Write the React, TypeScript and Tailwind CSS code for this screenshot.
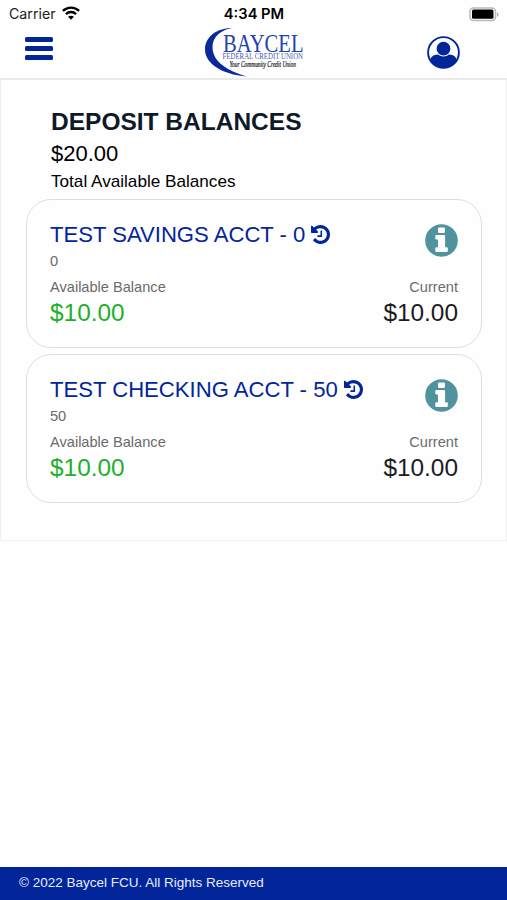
interface Account {
  name: string;
  suffix: string;
  available: string;
  current: string;
}

const accounts: Account[] = [
  { name: "TEST SAVINGS ACCT", suffix: "0", available: "$10.00", current: "$10.00" },
  { name: "TEST CHECKING ACCT", suffix: "50", available: "$10.00", current: "$10.00" },
];

function StatusBar() {
  return (
    <div className="grid h-7 grid-cols-3 items-center pl-[9px] pr-[8px] font-[Inter,sans-serif] text-[14px] leading-7 text-[#222]">
      <div className="flex items-center gap-[6px]">
        <span className="text-[14.2px]">Carrier</span>
        <svg className="mt-[-2px] h-[14px] w-[18px]" viewBox="0 0 18 14" fill="none" stroke="#000" strokeWidth="2.300">
          <path d="M.9 4.900c4.600-4.400 11.600-4.400 16.200 0M3.900 8.100c2.900-2.800 7.300-2.800 10.200 0" />
          <path d="M9 13.800l-2.900-3c1.600-1.500 4.200-1.500 5.800 0z" fill="#000" stroke="none" />
        </svg>
      </div>
      <span className="text-center text-[14.7px] font-semibold text-black">4:34 PM</span>
      <svg className="h-[15px] w-[31px] justify-self-end" viewBox="0 0 31 15">
        <rect x="2" y="1" width="25.500" height="12.500" rx="3.500" fill="#fff" stroke="#b9b9b9" strokeWidth="1.500" />
        <rect x="4" y="2.600" width="21.500" height="9.200" rx="1.500" fill="#000" />
        <path d="M29 5.200v4.600c1-.4 1.600-1.300 1.600-2.300s-.6-1.900-1.600-2.300z" fill="#b0b0b0" />
      </svg>
    </div>
  );
}

function Logo() {
  return (
    <svg className="h-[52px] w-[102px] overflow-visible" viewBox="0 0 102 52">
      <path d="M28 2C12 2 1 11.500 1 23.500 1 37 17 48.500 43 50.500 24 45 8.500 36 8.500 21 8.500 11 16 4.500 28 2z" fill="#0a2a9c" />
      <text x="19" y="26.300" fontFamily="'Liberation Serif', serif" fontSize="25" fill="#2443ad" textLength="80.500" lengthAdjust="spacingAndGlyphs">BAYCEL</text>
      <text x="18.500" y="33.300" fontFamily="'Liberation Serif', serif" fontSize="8.300" fill="#3f5cb8" textLength="80.500" lengthAdjust="spacingAndGlyphs">FEDERAL CREDIT UNION</text>
      <text x="25.500" y="41.300" fontFamily="'Liberation Serif', serif" fontStyle="italic" fontSize="7.500" fill="#222" stroke="#222" strokeWidth=".2" textLength="66.500" lengthAdjust="spacingAndGlyphs">Your Community Credit Union</text>
    </svg>
  );
}

function HistoryIcon() {
  return (
    <svg className="mt-[-2px] ml-[6px] size-[19px]" viewBox="0 128 1536 1536" fill="currentColor">
      <path d="M1536 896q0 156-61 298t-164 245-245 164-298 61q-172 0-327-72.500T177 1387q-7-10-6.500-22.500T179 1344l137-138q10-9 25-9 16 2 23 12 73 95 179 147t225 52q104 0 198.500-40.500T1130 1258t109.500-163.500T1280 896t-40.500-198.500T1130 534 966.500 424.500 768 384q-98 0-188 35.500T420 521l137 138q31 30 14 69-17 40-59 40H64q-26 0-45-19T0 704V256q0-42 40-59 39-17 69 14l130 129q107-101 244.500-156.500T768 128q156 0 298 61t245 164 164 245 61 298zm-640-288v448q0 14-9 23t-23 9H544q-14 0-23-9t-9-23v-64q0-14 9-23t23-9h224V608q0-14 9-23t23-9h64q14 0 23 9t9 23z" />
    </svg>
  );
}

function InfoIcon() {
  return (
    <svg className="mt-[2px] size-[33px]" viewBox="0 0 33 33">
      <circle cx="16.500" cy="16.500" r="16.300" fill="#51929f" />
      <g fill="#fff">
        <rect x="13" y="3.500" width="6.900" height="5.400" rx=".8" />
        <path d="M11.300 11h7.800a1 1 0 0 1 1 1v11.200h1.700a1 1 0 0 1 1 1v2.700a1 1 0 0 1-1 1H11.300a1 1 0 0 1-1-1v-2.700a1 1 0 0 1 1-1H13v-7.700h-1.700a1 1 0 0 1-1-1V12a1 1 0 0 1 1-1z" />
      </g>
    </svg>
  );
}

function Header() {
  return (
    <header className="flex h-[50px] items-start justify-between pl-[25px] pr-[47px]">
      <button aria-label="Menu" className="mt-[9px] flex w-7 flex-col gap-1">
        <span className="h-[5px] rounded-[1.5px] bg-[#02269a]" />
        <span className="h-[5px] rounded-[1.5px] bg-[#02269a]" />
        <span className="h-[5px] rounded-[1.5px] bg-[#02269a]" />
      </button>
      <div className="-mt-0.5 ml-[29px]">
        <Logo />
      </div>
      <button aria-label="Profile" className="mt-2">
        <svg className="size-[33px]" viewBox="0 0 33 33" fill="#02269a">
          <circle cx="16.500" cy="16.500" r="15.400" fill="none" stroke="#02269a" strokeWidth="1.900" />
          <circle cx="16.500" cy="12.700" r="6.900" />
          <path d="M3 24.500c1-3.600 3-5.600 8-5.900 3.200 2.600 7.800 2.600 11 0 5 .3 7 2.300 8 5.900-2.600 4.700-8 7.500-13.500 7.500S5.600 29.200 3 24.500z" />
        </svg>
      </button>
    </header>
  );
}

function AccountCard({ account }: { account: Account }) {
  return (
    <section className="h-[149px] rounded-[25px] border-[1.5px] border-[#dededf] bg-[#fefefe] px-[23px] pt-[22px]">
      <div className="flex items-start justify-between">
        <div>
          <h2 className="flex h-[26px] items-center text-[22.1px] leading-[26px] text-[#02269a]">
            {account.name} - {account.suffix}
            <HistoryIcon />
          </h2>
          <p className="mt-[5px] text-[14.6px] leading-[17px] text-[#6b6b6b]">{account.suffix}</p>
        </div>
        <InfoIcon />
      </div>
      <div className="mt-2 flex justify-between text-[14.6px] leading-[18px] text-[#6b6b6b]">
        <div>
          <p>Available Balance</p>
          <p className="mt-[3px] text-[24.4px] leading-7 text-[#1eb02b]">{account.available}</p>
        </div>
        <div className="text-right">
          <p>Current</p>
          <p className="mt-[3px] text-[24.4px] leading-7 text-[#1c1c1e]">{account.current}</p>
        </div>
      </div>
    </section>
  );
}

export default function App() {
  return (
    <div className="flex h-[900px] w-[507px] flex-col bg-[#fefefe] font-['Liberation_Sans',Arial,sans-serif]">
      <StatusBar />
      <Header />
      <main className="h-[463px] border border-t-2 border-[#f0f0f0] border-t-[#e9e9e9] pt-[28px] pr-[24px] pl-[25px]">
        <div className="pl-[25px]">
          <h1 className="text-[24.5px] font-bold leading-[28px] text-[#0f1928]">DEPOSIT BALANCES</h1>
          <p className="mt-1 text-[22px] leading-7 text-black">$20.00</p>
          <p className="mt-[3px] text-[17.15px] leading-5 text-black">Total Available Balances</p>
        </div>
        <div className="mt-2 flex flex-col gap-[6px]">
          {accounts.map((account) => (
            <AccountCard key={account.name} account={account} />
          ))}
        </div>
      </main>
      <footer className="mt-auto flex h-[33px] items-center bg-[#02269a] pl-[19px] text-[13.5px] text-[#e8ecff]">
        <p className="pb-px">© 2022 Baycel FCU. All Rights Reserved</p>
      </footer>
    </div>
  );
}
